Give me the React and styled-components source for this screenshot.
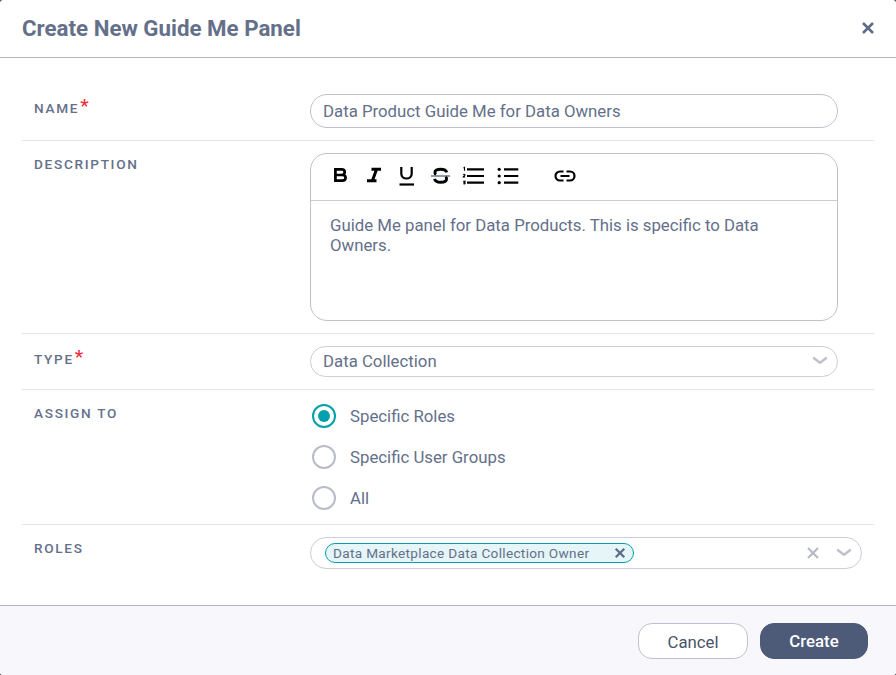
import React from "react";
import styled, { createGlobalStyle } from "styled-components";

const Global = createGlobalStyle`
  html, body { margin: 0; padding: 0; background: #3a3a3a; }
  body { font-family: Roboto, "Liberation Sans", sans-serif; }
  * { box-sizing: border-box; }
`;

const Dialog = styled.div`
  width: 896px;
  height: 675px;
  background: #fff;
  border-radius: 3px;
  display: flex;
  flex-direction: column;
  overflow: hidden;
`;
const Header = styled.header`
  height: 58px;
  flex: none;
  border-bottom: 1px solid #b5b5c3;
  display: flex;
  align-items: center;
  justify-content: space-between;
  padding: 0 21px 2px 22px;
`;
const Title = styled.h1`
  margin: 0;
  font-size: 22.3px;
  line-height: 26px;
  font-weight: 700;
  color: #64708a;
`;
const IconButton = styled.span`
  display: inline-flex;
  color: ${(p) => p.$color || "#5f6c88"};
`;
const Body = styled.main`
  flex: 1;
  padding: 24px 22px 0;
`;
const Row = styled.section`
  display: grid;
  grid-template-columns: 276px 1fr;
  padding: 12px;
  border-bottom: ${(p) => (p.$last ? "none" : "1px solid #e4e4ea")};
`;
const Label = styled.label`
  font-size: 13.6px;
  line-height: 16px;
  font-weight: 500;
  letter-spacing: 1.7px;
  color: #64708a;
  margin-top: ${(p) => p.$top || "3px"};
`;
const Star = styled.span`
  color: #f0303e;
  font-size: 19px;
  line-height: 16px;
  letter-spacing: 0;
  margin-left: 1px;
  position: relative;
  top: -1px;
`;
const TextField = styled.div`
  width: 528px;
  height: 34px;
  border: 1px solid #bfc1cc;
  border-radius: 17px;
  padding: 0 12px;
  display: flex;
  align-items: center;
  font-size: 16.8px;
  color: #64708a;
`;
const Editor = styled.div`
  width: 528px;
  height: 168px;
  border: 1px solid #bfc1cc;
  border-radius: 17px;
  display: flex;
  flex-direction: column;
`;
const Toolbar = styled.div`
  height: 47px;
  flex: none;
  border-bottom: 1px solid #c9cad4;
  display: flex;
  align-items: center;
  padding: 0 0 2px 20px;
`;
const Tool = styled.span`
  display: inline-flex;
  width: ${(p) => p.$w || "33px"};
`;
const EditorText = styled.div`
  padding: 14px 19px;
  font-size: 16.8px;
  line-height: 20px;
  color: #64708a;
`;
const SelectBox = styled.div`
  width: ${(p) => p.$w || "528px"};
  height: ${(p) => p.$h || "31px"};
  border: 1px solid #cdced6;
  border-radius: 16px;
  padding: ${(p) => p.$pad || "0 9px 1px 12px"};
  display: flex;
  align-items: center;
  justify-content: space-between;
  font-size: 16.8px;
  color: #64708a;
`;
const Indicators = styled.div`
  display: flex;
  align-items: center;
  gap: 16px;
`;
const RadioList = styled.div`
  display: flex;
  flex-direction: column;
  gap: 17px;
  padding: 2px 0;
`;
const RadioRow = styled.div`
  display: flex;
  align-items: center;
  gap: 14px;
  height: 24px;
  padding-left: 2px;
  font-size: 16.8px;
  color: #64708a;
`;
const Radio = styled.span`
  width: 24px;
  height: 24px;
  flex: none;
  border-radius: 50%;
  border: 2px solid ${(p) => (p.$on ? "#00a0ad" : "#b9bcc8")};
  display: flex;
  align-items: center;
  justify-content: center;
  &::after {
    content: "";
    display: ${(p) => (p.$on ? "block" : "none")};
    width: 12px;
    height: 12px;
    border-radius: 50%;
    background: #00a0ad;
  }
`;
const Chip = styled.div`
  height: 20px;
  width: 309px;
  border: 1px solid #00a0ad;
  border-radius: 10px;
  background: #e5f5f8;
  display: flex;
  align-items: center;
  justify-content: space-between;
  padding: 0 7px 0 7px;
  font-size: 13.6px;
  letter-spacing: 0.32px;
  color: #64708a;
`;
const Footer = styled.footer`
  height: 70px;
  flex: none;
  background: #f7f7fc;
  border-top: 1px solid #b5b5c3;
  display: flex;
  align-items: center;
  justify-content: flex-end;
  gap: 12px;
  padding: 0 28px 0 0;
`;
const Button = styled.button`
  width: ${(p) => (p.$primary ? "108px" : "110px")};
  height: 36px;
  border-radius: 14px;
  border: 1px solid ${(p) => (p.$primary ? "#4d5a78" : "#bfc1cc")};
  background: ${(p) => (p.$primary ? "#4d5a78" : "#fff")};
  color: ${(p) => (p.$primary ? "#fff" : "#4a5468")};
  font-family: inherit;
  font-size: 16.8px;
  font-weight: ${(p) => (p.$primary ? 500 : 400)};
  padding: ${(p) => (p.$primary ? "1px 0 0" : "3px 0 0")};
`;

const Cross = ({ size = 14, width = 2.6 }) => (
  <svg width={size} height={size} viewBox="0 0 14 14" fill="none" stroke="currentColor" strokeWidth={width}>
    <path d="M2 2l10 10M12 2L2 12" />
  </svg>
);
const Chevron = () => (
  <svg width="16" height="10" viewBox="0 0 16 10" fill="none" stroke="currentColor" strokeWidth="2.6" strokeLinecap="round" strokeLinejoin="round">
    <path d="M2 2.2l6 4.6 6-4.6" />
  </svg>
);

const IconSvg = ({ children }) => (
  <svg width="22" height="24" viewBox="0 0 22 24" fill="none" stroke="#000">{children}</svg>
);
const BoldIcon = () => (
  <IconSvg>
    <path d="M4.4 11H10.6c2 0 3.1-1.1 3.1-2.9 0-1.7-1.1-2.8-3.1-2.8H4.4V16.7H11c2.3 0 3.6-1.3 3.6-2.9 0-1.7-1.3-2.8-3.6-2.8" strokeWidth="2.7" />
  </IconSvg>
);
const ItalicIcon = () => (
  <IconSvg>
    <path d="M7.5 5.3h9.5M3 16.7h9.5M12.6 5.3l-4.2 11.4" strokeWidth="3" />
  </IconSvg>
);
const UnderlineIcon = () => (
  <IconSvg>
    <path d="M4.3 3v6.8c0 2.9 2.2 4.7 5.2 4.7s5.2-1.8 5.2-4.7V3" strokeWidth="2.2" />
    <path d="M2.5 20.5h14.5" strokeWidth="2.2" />
  </IconSvg>
);
const StrikeIcon = () => (
  <IconSvg>
    <path d="M16.8 8.4c-.6-2-2.6-3.2-6.1-3.2-3.6 0-5.8 1.3-5.8 3.2 0 1 .4 1.7 1.2 2.2M4.5 14.8c.6 2.1 2.7 3.4 6.1 3.4 3.8 0 6-1.5 6-3.5 0-.9-.4-1.5-1.2-2" strokeWidth="2.9" />
    <path d="M1 12h19" stroke="#4b5568" strokeWidth="1.2" />
  </IconSvg>
);
const OrderedIcon = () => (
  <svg width="23" height="24" viewBox="0 0 23 24" fill="none" stroke="#000">
    <path d="M5 5.3h17M5 12h17M5 18.7h17" strokeWidth="2.2" />
    <path d="M1.5 4l1-.6v3.4M1.2 10.6c.4-.5 1.8-.5 1.8.4 0 .7-1.3 1.1-1.8 2h2M1.3 17.4h1.7l-.8 1c.8 0 1 .4 1 .8 0 .8-1.3.9-1.9.4" strokeWidth="1.1" />
  </svg>
);
const BulletIcon = () => (
  <svg width="23" height="24" viewBox="0 0 23 24" fill="none" stroke="#000">
    <path d="M8 5.3h14.3M8 12h14.3M8 18.7h14.3" strokeWidth="2.2" />
    <circle cx="3.2" cy="5.3" r="1.6" fill="#000" stroke="none" />
    <circle cx="3.2" cy="12" r="1.6" fill="#000" stroke="none" />
    <circle cx="3.2" cy="18.7" r="1.6" fill="#000" stroke="none" />
  </svg>
);
const LinkIcon = () => (
  <svg width="24" height="24" viewBox="0 0 24 24" fill="none" stroke="#000" strokeWidth="2.2">
    <path d="M10.5 7.5H7a4.5 4.5 0 0 0 0 9h3.5M13.5 7.5H17a4.5 4.5 0 0 1 0 9h-3.5M7.5 12h9" />
  </svg>
);

export default function App() {
  return (
    <>
      <Global />
      <Dialog>
        <Header>
          <Title>Create New Guide Me Panel</Title>
          <IconButton><Cross /></IconButton>
        </Header>
        <Body>
          <Row>
            <Label $top="5px">NAME<Star>*</Star></Label>
            <TextField>Data Product Guide Me for Data Owners</TextField>
          </Row>
          <Row>
            <Label>DESCRIPTION</Label>
            <Editor>
              <Toolbar>
                <Tool><BoldIcon /></Tool>
                <Tool><ItalicIcon /></Tool>
                <Tool><UnderlineIcon /></Tool>
                <Tool $w="32px"><StrikeIcon /></Tool>
                <Tool $w="34px"><OrderedIcon /></Tool>
                <Tool $w="57px"><BulletIcon /></Tool>
                <Tool><LinkIcon /></Tool>
              </Toolbar>
              <EditorText>Guide Me panel for Data Products. This is specific to Data Owners.</EditorText>
            </Editor>
          </Row>
          <Row>
            <Label $top="4px">TYPE<Star>*</Star></Label>
            <SelectBox>
              Data Collection
              <IconButton $color="#c0c3ce"><Chevron /></IconButton>
            </SelectBox>
          </Row>
          <Row>
            <Label>ASSIGN TO</Label>
            <RadioList>
              <RadioRow><Radio $on />Specific Roles</RadioRow>
              <RadioRow><Radio />Specific User Groups</RadioRow>
              <RadioRow><Radio />All</RadioRow>
            </RadioList>
          </Row>
          <Row $last>
            <Label>ROLES</Label>
            <SelectBox $w="552px" $h="32px" $pad="0 9px 0 14px">
              <Chip>
                Data Marketplace Data Collection Owner
                <IconButton><Cross size={12} width={2.6} /></IconButton>
              </Chip>
              <Indicators>
                <IconButton $color="#b7bbc8"><Cross size={14} width={2.2} /></IconButton>
                <IconButton $color="#c0c3ce"><Chevron /></IconButton>
              </Indicators>
            </SelectBox>
          </Row>
        </Body>
        <Footer>
          <Button>Cancel</Button>
          <Button $primary>Create</Button>
        </Footer>
      </Dialog>
    </>
  );
}
